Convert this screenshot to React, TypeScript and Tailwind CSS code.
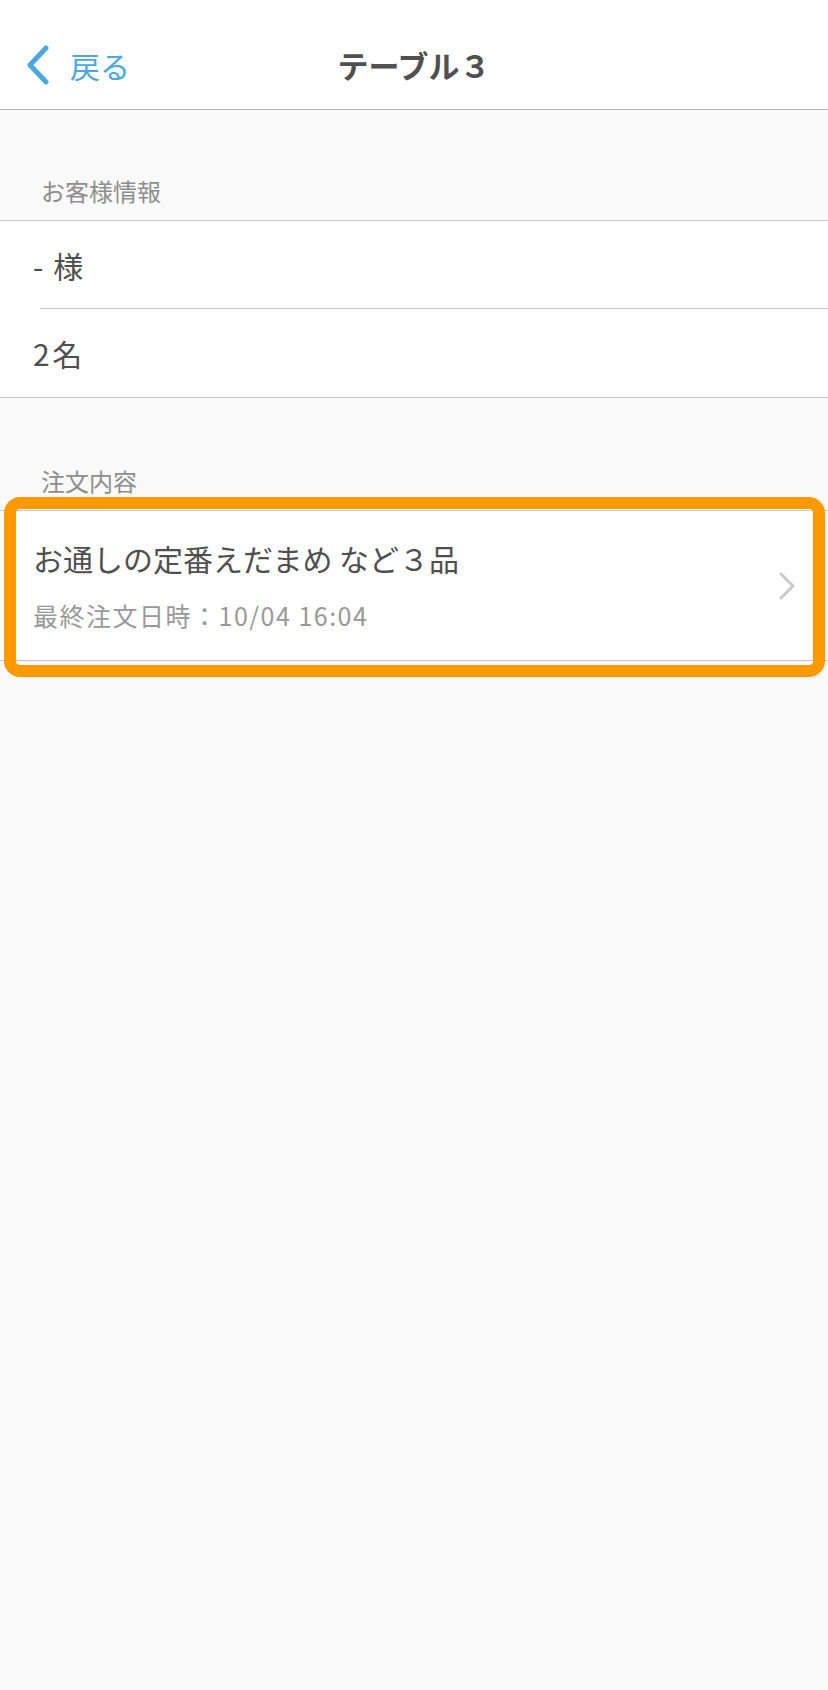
import React from 'react'

const font = { fontFamily: '"Noto Sans CJK JP", "Noto Sans", sans-serif' }

function BackChevron() {
  return (
    <svg width="24" height="40" viewBox="0 0 24 40" fill="none" className="shrink-0">
      <path d="M20 3 L4 20 L20 37" stroke="#4aa8e0" strokeWidth="5" strokeLinecap="round" strokeLinejoin="round" />
    </svg>
  )
}

function RowChevron() {
  return (
    <svg width="18" height="28" viewBox="0 0 18 28" fill="none" className="shrink-0">
      <path d="M3 2 L15 14 L3 26" stroke="#c7c7cc" strokeWidth="3" strokeLinecap="round" strokeLinejoin="round" />
    </svg>
  )
}

export default function App() {
  return (
    <div className="min-h-[1690px] w-full bg-[#f9f9f9]" style={font}>
      {/* Header */}
      <div className="relative flex h-[110px] items-center bg-white border-b border-[#b3b3b3] pt-[20px]">
        <div className="flex items-center gap-[20px] pl-[26px]">
          <BackChevron />
          <span className="text-[30px] leading-none text-[#4aa8e0]">戻る</span>
        </div>
        <div className="absolute inset-0 pt-[20px] flex items-center justify-center pointer-events-none">
          <span className="text-[31px] font-bold leading-none text-[#505050]">テーブル３</span>
        </div>
      </div>

      {/* お客様情報 */}
      <div className="flex h-[110px] items-end pb-[17px] pl-[41px]">
        <span className="text-[24px] leading-none text-[#8e8e8e]">お客様情報</span>
      </div>
      <div className="bg-white border-y border-[#c8c8c8]">
        <div className="flex h-[87px] items-center pl-[33px]">
          <span className="text-[30px] leading-none tracking-[1.5px] text-[#4f4f4f]">- 様</span>
        </div>
        <div className="ml-[40px] h-px bg-[#c8c8c8]" />
        <div className="flex h-[88px] items-center pl-[33px]">
          <span className="text-[30px] leading-none tracking-[2.5px] text-[#4f4f4f]">2名</span>
        </div>
      </div>

      {/* 注文内容 */}
      <div className="flex h-[112px] items-end pb-[17px] pl-[41px]">
        <span className="text-[24px] leading-none text-[#8e8e8e]">注文内容</span>
      </div>
      <div className="relative">
        <div className="flex h-[151px] items-center bg-white border-y border-[#c8c8c8] pl-[33px] pr-[32px]">
          <div className="flex flex-1 flex-col gap-[30px]">
            <span className="text-[30px] leading-none text-[#4f4f4f]">お通しの定番えだまめ など３品</span>
            <span className="text-[25px] leading-none tracking-[1.5px] text-[#999999]">最終注文日時：10/04 16:04</span>
          </div>
          <RowChevron />
        </div>
        {/* highlight */}
        <div className="absolute left-[4px] right-[3px] top-[-13px] h-[180px] rounded-[16px] border-[12px] border-[#ff9900] pointer-events-none" />
      </div>
    </div>
  )
}
